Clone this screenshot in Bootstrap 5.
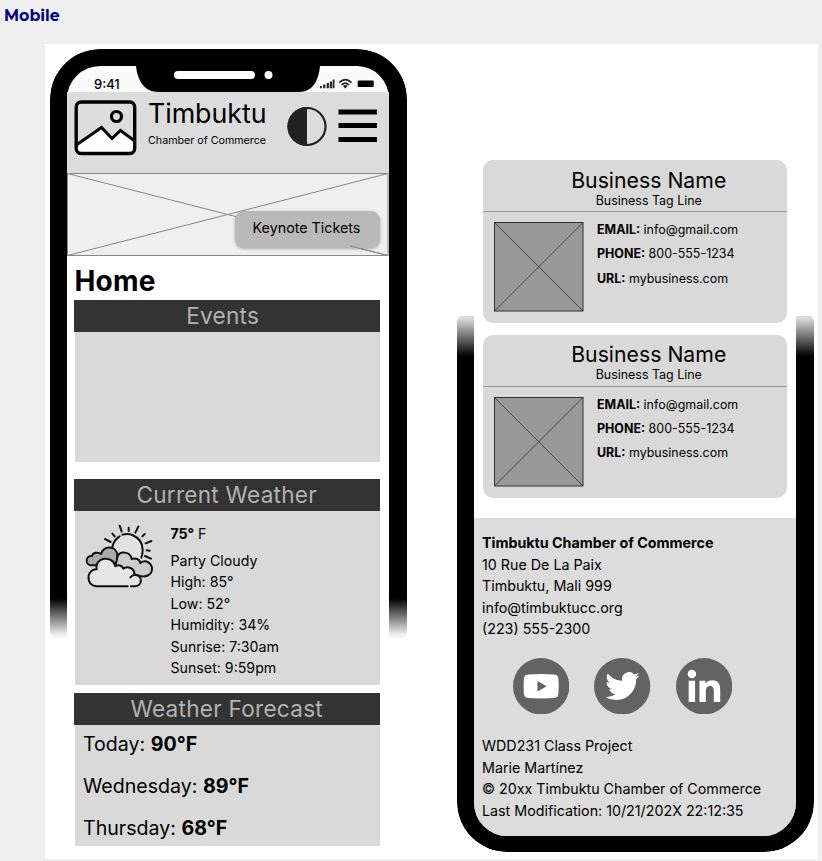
<!DOCTYPE html>
<html lang="en">
<head>
<meta charset="utf-8">
<meta name="viewport" content="width=device-width, initial-scale=1">
<title>Timbuktu Chamber of Commerce – Mobile wireframe</title>
<link href="https://cdn.jsdelivr.net/npm/bootstrap@5.3.0/dist/css/bootstrap.min.css" rel="stylesheet">
<style>
  body { background: #efefef; color: #000; font-family: Inter, "Liberation Sans", sans-serif; overflow: hidden; height: 861px; }
  b { font-weight: 700; }
  .page-title { height: 44px; padding: 4px 0 0 4px; font: 700 15.8px/23px Montserrat, Inter, sans-serif; color: #000080; }
  .board { width: 773px; height: 815px; margin-left: 45px; }

  /* phone shells: the open end of each bezel fades out */
  .phone { position: relative; z-index: 0; width: 356.5px; padding: 0 18px 0 17px; }
  .phone::before { content: ""; position: absolute; z-index: -1; left: 0; right: 0; border: solid #000; background: #fafafa; }
  .phone-top { margin: 5px 0 0 5px; }
  .phone-top::before { top: 0; height: 589px; border-width: 17px 18px 0 17px; border-radius: 50px 50px 5px 5px;
    -webkit-mask: linear-gradient(#000 93.3%, rgba(0,0,0,.05) 99.5%); mask: linear-gradient(#000 93.3%, rgba(0,0,0,.05) 99.5%); }
  .phone-end { margin: 116px 0 0 50.5px; height: 692px; }
  .phone-end::before { bottom: 0; height: 536px; border-width: 0 18px 16px 17px; border-radius: 5px 5px 50px 50px; background: linear-gradient(#fff 60%, #dcdcdc 60%);
    -webkit-mask: linear-gradient(rgba(0,0,0,.15) .5%, #000 7.5%); mask: linear-gradient(rgba(0,0,0,.15) .5%, #000 7.5%); }

  .status { height: 43px; }
  .clock { width: 69px; padding: 25px 0 0 27px; font-size: 13px; font-weight: 500; line-height: 20px; }
  .site-head { height: 81px; background: #dcdcdc; padding: 8px 10.5px 0 7px; }
  .brand { width: 119px; margin-left: 11px; white-space: nowrap; }
  .brand-name { font-size: 26.8px; line-height: 30px; letter-spacing: -.05px; margin-top: -2px; }
  .brand-sub { font-size: 10.7px; line-height: 14px; margin-top: 5.5px; }
  .hero { height: 82px; position: relative; background: #efefef; }
  .cta { position: absolute; left: 168px; top: 38px; width: 145px; height: 37px; padding: 0 2px 3px 0; border: 0; border-radius: 9px; background: #b9b9b9;
    font-size: 14.3px; line-height: 34px; box-shadow: 0 1px 3px rgba(0,0,0,.3); color: #000; text-align: center; }
  .home { background: #fff; height: 591px; padding: 9px 9px 0 7px; }
  .home h2 { font-size: 28px; font-weight: 700; line-height: 35px; height: 36px; margin: 0 0 0 .5px; letter-spacing: .2px; }
  .panel-bar { height: 32px; background: #333; color: #b2b2b2; font-size: 22.6px; font-weight: 400; line-height: 32px; text-align: center; letter-spacing: .25px; margin: 0; }
  .panel-body { background: #d9d9d9; margin-left: 1px; }
  .events { height: 130px; margin-bottom: 16.500px; }
  .events-bar { padding-right: 8px; }
  .weather { height: 174.500px; margin-bottom: 8px; padding: 4px 0 0 5px; }
  .facts { font-size: 14.2px; line-height: 21.5px; padding: 8.5px 0 0 10.5px; }
  .facts .now { margin-bottom: 5px; }
  .forecast { height: 121px; padding: 0 0 0 8px; font-size: 19.6px; }
  .forecast div { line-height: 38px; height: 42px; }

  .biz { height: 163px; border: 0; border-radius: 10px; background: #d9d9d9; color: #000; margin: 0 8.500px 11.5px 8.500px; }
  .biz-head { height: 52px; border-bottom: 1px solid #999; padding: 6.800px 0 0 28px; text-align: center; }
  .biz-name { font-size: 21.2px; line-height: 26px; letter-spacing: .03px; }
  .biz-tag { font-size: 12.45px; line-height: 15px; }
  .biz-body { padding: 10px 0 0 11px; gap: 14px; }
  .biz-info { font-size: 12.45px; line-height: 24.1px; margin: -3.700px 0 0 -.5px; }
  .foot { height: 318px; margin-top: 20.500px; background: #dcdcdc; padding: 14.2px 0 0 8px; border-radius: 0 0 33px 33px; font-size: 14.27px; line-height: 21.5px; white-space: nowrap; }
  .social { gap: 25px; padding: 18.500px 0 0 31px; margin-bottom: 21px; }
  svg { display: block; flex-shrink: 0; }
</style>
</head>
<body>
<h1 class="page-title m-0">Mobile</h1>
<main class="board bg-white d-flex align-items-start">

  <section class="phone phone-top">
    <div class="status d-flex">
      <div class="clock">9:41</div>
      <!-- notch with speaker and camera -->
      <svg width="184" height="43" viewBox="0 0 184 43">
        <path d="M0 16H184C183 32 176 43 163 43H22C9 43 1 32 0 16Z"/>
        <rect x="38" y="22" width="81" height="8" rx="4" fill="#fff"/>
        <circle cx="132.500" cy="26" r="4" fill="#fff"/>
      </svg>
      <svg width="56" height="43" viewBox="0 0 56 43">
        <path d="M0 37h1.800v2.300H0zM3.200 35.500h2.200v3.800H3.200zM6.700 34h2.200v5.300H6.700zM9.800 32.500h2.200v6.800H9.800zM12.700 30.500h1.800v8.800h-1.800z" fill="#222"/>
        <g fill="none" stroke="#222" stroke-width="1.700"><path d="M19.200 33.600Q25.300 27.600 31.400 33.600M21.500 36Q25.300 32.300 29.100 36"/></g>
        <path d="M23 37Q25.300 35.200 27.600 37L25.300 39.600Z" fill="#222"/>
        <rect x="37.700" y="31.500" width="16" height="6.500" rx="1"/>
      </svg>
    </div>
    <header class="site-head d-flex">
      <svg width="63" height="56" viewBox="0 0 63 56">
        <path d="M2 46L27 28L38 40L47 31L60 42V50Q60 53 57 53H6Q2 53 2 50Z" fill="#fff"/>
        <rect x="2.200" y="2" width="58.500" height="51.500" rx="5" fill="none" stroke="#000" stroke-width="3.400"/>
        <path d="M3 44.500L27.500 27.500L38 38.500L46.500 30.500L60 40.500" fill="none" stroke="#000" stroke-width="3"/>
        <circle cx="42.500" cy="16.500" r="5" fill="none" stroke="#000" stroke-width="3.200"/>
      </svg>
      <div class="brand">
        <div class="brand-name">Timbuktu</div>
        <div class="brand-sub">Chamber of Commerce</div>
      </div>
      <svg class="ms-auto" width="92" height="56" viewBox="0 0 92 56">
        <circle cx="21" cy="26.500" r="18.500" fill="none" stroke="#222" stroke-width="2.200"/>
        <path d="M21 7A19.500 19.500 0 0 0 21 46Z" fill="#222"/>
        <path d="M52.500 9.500H91V14.500H52.500zM52.500 23H91V28H52.500zM52.500 37H91V42H52.500z"/>
      </svg>
    </header>
    <div class="hero">
      <svg width="321.500" height="83" viewBox="0 0 321.500 83" fill="none" stroke="#888" stroke-width="1">
        <rect x=".5" y=".5" width="320.500" height="82"/>
        <path d="M.5 .5L321 82.500M.5 82.500L321 .5"/>
      </svg>
      <button type="button" class="btn cta">Keynote Tickets</button>
      <svg class="position-absolute top-0 start-0 pe-none" width="321" height="83" viewBox="0 0 321 83" stroke="#888"><path d="M283 73L321 82.500"/></svg>
    </div>
    <div class="home">
      <h2>Home</h2>
      <h3 class="panel-bar events-bar">Events</h3>
      <div class="panel-body events"></div>
      <h3 class="panel-bar">Current Weather</h3>
      <div class="panel-body weather d-flex">
        <svg width="80" height="80" viewBox="0 0 240 240" fill="none" stroke="#111" stroke-width="6" stroke-linecap="round" stroke-linejoin="round">
          <circle cx="142" cy="104" r="46" fill="#e2e2e2" stroke="none"/>
          <path d="M97 96Q101 75 119 64M127 59Q143 54 157 60Q188 73 188 104Q188 118 184 128"/>
          <path d="M119 32L125 50M146 38V48M175 35L166 53M97 56L104 64M75 72L92 81M187 64L194 57M197 85L214 78M200 106L209 107M195 123L213 131"/>
          <path d="M48 151H32C15 149 16 121 36 123C38 111 56 111 64 117C67 92 110 88 112 122L110 160Z" fill="#aaa"/>
          <path d="M113 123C120 108 151 108 155 132C166 128 179 132 181 144C198 131 216 146 216 162C216 180 198 187 180 183L105 160Z" fill="#ccc"/>
          <path d="M50 165C18 158 17 213 48 214H165C188 213 189 180 164 180C164 157 142 152 129 161C126 150 115 148 106 154C102 118 42 126 50 165Z" fill="#e6e6e6" stroke="none"/>
          <path d="M143 214H48C18 212 17 163 50 163C42 126 99 119 106 154C115 148 126 151 130 161C142 152 164 159 163 178M153 214H165C188 213 189 180 164 180C158 180 154 183 151 187"/>
        </svg>
        <div class="facts">
          <div class="now"><b>75°</b> F</div>
          <div>Party Cloudy</div>
          <div>High: 85°</div>
          <div>Low: 52°</div>
          <div>Humidity: 34%</div>
          <div>Sunrise: 7:30am</div>
          <div>Sunset: 9:59pm</div>
        </div>
      </div>
      <h3 class="panel-bar">Weather Forecast</h3>
      <div class="panel-body forecast">
        <div>Today: <b>90°F</b></div>
        <div>Wednesday: <b>89°F</b></div>
        <div>Thursday: <b>68°F</b></div>
      </div>
    </div>
  </section>

  <section class="phone phone-end">
    <article class="card biz">
      <div class="biz-head">
        <div class="biz-name">Business Name</div>
        <div class="biz-tag">Business Tag Line</div>
      </div>
      <div class="biz-body d-flex">
        <svg width="90" height="90" viewBox="0 0 90 90" fill="#999" stroke="#333"><rect x=".5" y=".5" width="88.500" height="88.500"/><path d="M.5 .5L89 89M89 .5L.5 89" stroke-width=".8"/></svg>
        <div class="biz-info">
          <div><b>EMAIL:</b> info@gmail.com</div>
          <div><b>PHONE:</b> 800-555-1234</div>
          <div><b>URL:</b> mybusiness.com</div>
        </div>
      </div>
    </article>
    <article class="card biz mb-0">
      <div class="biz-head">
        <div class="biz-name">Business Name</div>
        <div class="biz-tag">Business Tag Line</div>
      </div>
      <div class="biz-body d-flex">
        <svg width="90" height="90" viewBox="0 0 90 90" fill="#999" stroke="#333"><rect x=".5" y=".5" width="88.500" height="88.500"/><path d="M.5 .5L89 89M89 .5L.5 89" stroke-width=".8"/></svg>
        <div class="biz-info">
          <div><b>EMAIL:</b> info@gmail.com</div>
          <div><b>PHONE:</b> 800-555-1234</div>
          <div><b>URL:</b> mybusiness.com</div>
        </div>
      </div>
    </article>
    <footer class="foot">
      <div><b>Timbuktu Chamber of Commerce</b></div>
      <div>10 Rue De La Paix</div>
      <div>Timbuktu, Mali 999</div>
      <div>info@timbuktucc.org</div>
      <div>(223) 555-2300</div>
      <div class="social d-flex">
        <svg width="56.300" height="56.300" viewBox="0 0 56 56">
          <circle cx="28" cy="28" r="28" fill="#636363"/>
          <path d="M15 16.300Q28 15.300 41 16.300Q45 16.600 45.200 21Q45.700 28 45.200 35Q45 39.400 41 39.800Q28 40.700 15 39.800Q11 39.400 10.800 35Q10.300 28 10.800 21Q11 16.600 15 16.300Z" fill="#fff"/>
          <path d="M24.300 22.800V33.200L33.500 28Z" fill="#636363"/>
        </svg>
        <svg width="56.300" height="56.300" viewBox="0 0 56 56">
          <circle cx="28" cy="28" r="28" fill="#636363"/>
          <path transform="translate(11.300 9.900) scale(2.130)" fill="#fff" d="M5.026 15c6.038 0 9.341-5.003 9.341-9.334 0-.14 0-.282-.006-.422A6.685 6.685 0 0 0 16 3.542a6.658 6.658 0 0 1-1.889.518 3.301 3.301 0 0 0 1.447-1.817 6.533 6.533 0 0 1-2.087.793A3.286 3.286 0 0 0 7.875 6.030a9.325 9.325 0 0 1-6.767-3.429 3.289 3.289 0 0 0 1.018 4.382A3.323 3.323 0 0 1 .64 6.575v.045a3.288 3.288 0 0 0 2.632 3.218 3.203 3.203 0 0 1-.865.115 3.230 3.230 0 0 1-.614-.057 3.283 3.283 0 0 0 3.067 2.277A6.588 6.588 0 0 1 .78 13.580a6.320 6.320 0 0 1-.78-.045A9.344 9.344 0 0 0 5.026 15z"/>
        </svg>
        <svg width="56.300" height="56.300" viewBox="0 0 56 56">
          <circle cx="28" cy="28" r="28" fill="#636363"/>
          <g fill="#fff"><circle cx="15.800" cy="16" r="4.200"/><path d="M12.600 22.700H19V43.700H12.600ZM23.300 22.700H29.300V25.600Q31.300 22.200 36 22.200Q44 22.200 44 31.500V43.700H37.600V32.500Q37.600 27.800 33.900 27.800Q29.700 27.800 29.700 32.800V43.700H23.300Z"/></g>
        </svg>
      </div>
      <div>WDD231 Class Project</div>
      <div>Marie Martínez</div>
      <div>© 20xx Timbuktu Chamber of Commerce</div>
      <div>Last Modification: 10/21/202X 22:12:35</div>
    </footer>
  </section>
</main>
<script src="https://cdn.jsdelivr.net/npm/bootstrap@5.3.0/dist/js/bootstrap.bundle.min.js"></script>
</body>
</html>
